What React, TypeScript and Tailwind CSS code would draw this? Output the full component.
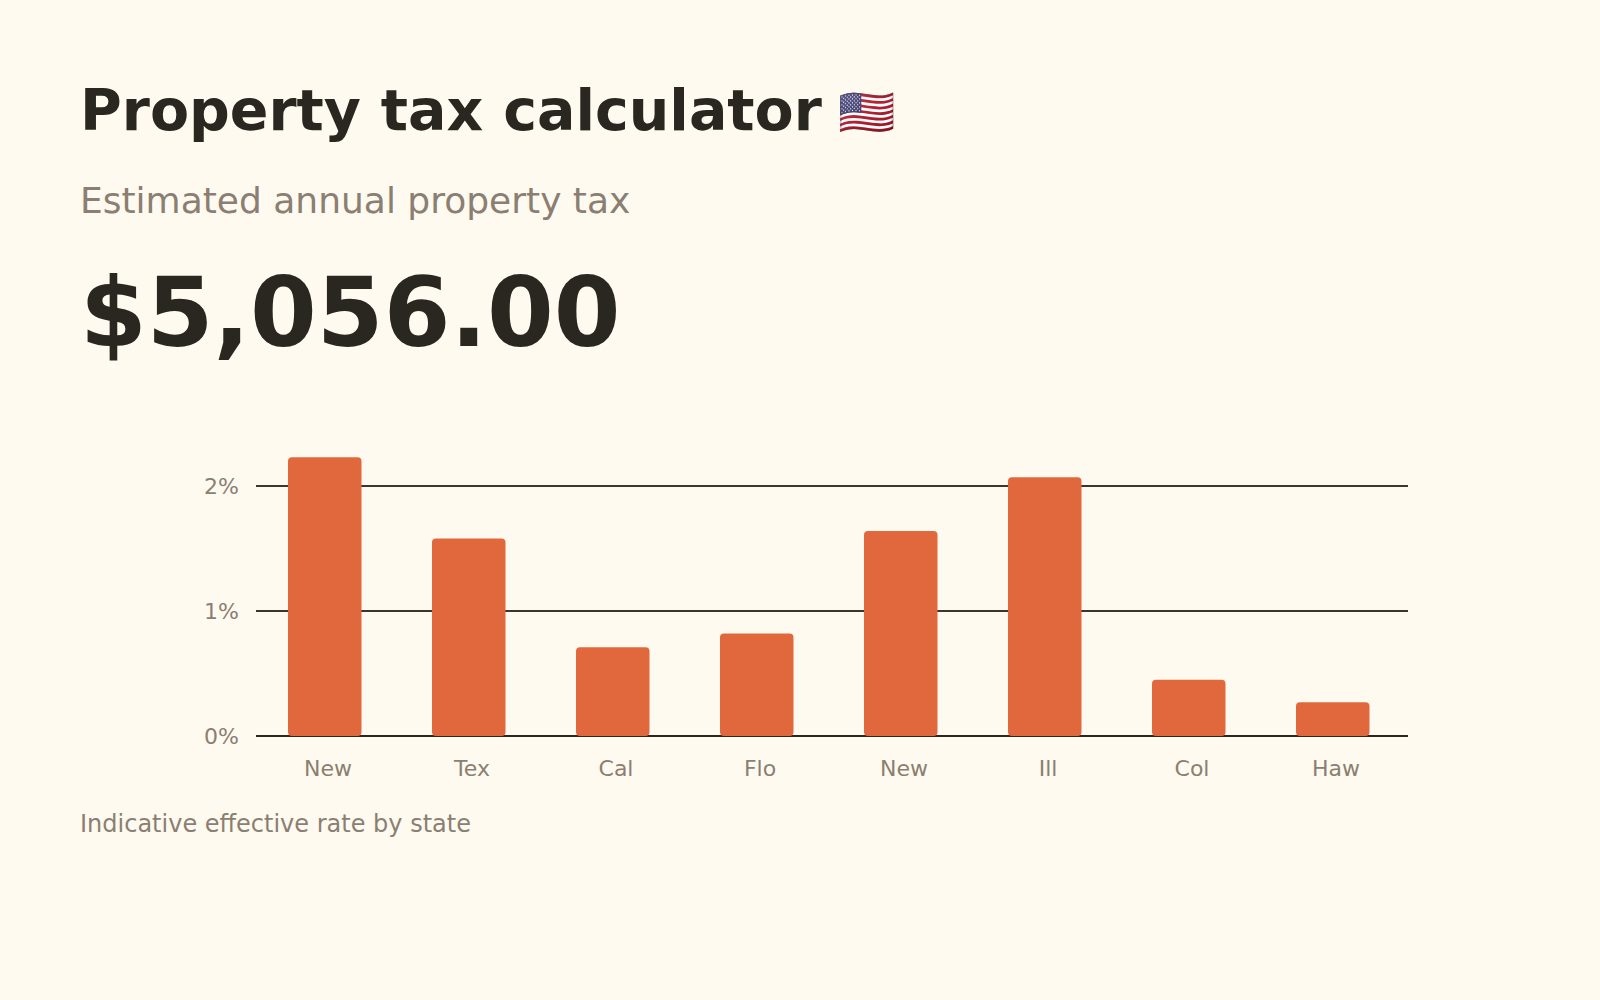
const rates = [
  { state: "New", value: 2.23 },
  { state: "Tex", value: 1.58 },
  { state: "Cal", value: 0.71 },
  { state: "Flo", value: 0.82 },
  { state: "New", value: 1.64 },
  { state: "Ill", value: 2.07 },
  { state: "Col", value: 0.45 },
  { state: "Haw", value: 0.27 },
];

// chart geometry, in svg units
const axisLeft = 176;
const band = 144;
const base = 336;
const perPercent = 125;

function RateChart() {
  return (
    <svg width="1440" height="400" viewBox="0 0 1440 400" className="block">
      {[0, 1, 2].map((t) => {
        const y = base - t * perPercent;
        return (
          <g key={t}>
            <line
              x1={axisLeft}
              x2={axisLeft + band * rates.length}
              y1={y}
              y2={y}
              stroke={t === 0 ? "#2a2620" : "#3a352f"}
              strokeWidth={2}
            />
            <text x={159} y={y + 8} textAnchor="end" fontSize="22" fill="#8a7f72">
              {t}%
            </text>
          </g>
        );
      })}
      {rates.map((r, i) => {
        const h = r.value * perPercent;
        return (
          <g key={i}>
            <rect x={208 + i * band} y={base - h} width={73.5} height={h} rx={4} fill="#e1683d" />
            <text x={axisLeft + band / 2 + i * band} y={376} textAnchor="middle" fontSize="22" fill="#8a7f72">
              {r.state}
            </text>
          </g>
        );
      })}
    </svg>
  );
}

export default function App() {
  return (
    <div className="min-h-screen bg-[#fffaf0] px-20 pt-[82px] font-['DejaVu_Sans',sans-serif]">
      <h1 className="text-[57px] font-bold leading-none text-[#2a2620]">
        Property tax calculator<span className="align-[2px] text-[46px]"> 🇺🇸</span>
      </h1>
      <p className="mt-[44px] text-[36px] leading-none text-[#8a7f72]">Estimated annual property tax</p>
      <div className="mt-[46px] text-[96px] font-bold leading-none text-[#2a2620]">$5,056.00</div>
      <div className="mt-[39px]">
        <RateChart />
      </div>
      <p className="mt-[12px] text-[24px] leading-none text-[#8a7f72]">Indicative effective rate by state</p>
    </div>
  );
}
